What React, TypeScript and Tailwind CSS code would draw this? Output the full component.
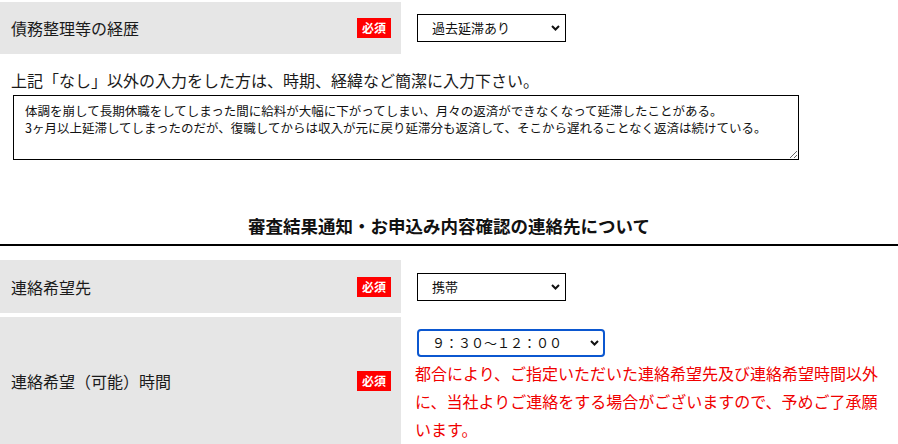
import { ChangeEvent, useState } from "react"

const FONT = { fontFamily: '"Noto Sans CJK JP", "Noto Sans", sans-serif' }

function Badge() {
  return (
    <span className="flex h-[20px] w-[34px] items-center justify-center bg-[#ff0000] text-[12px] font-bold leading-none text-white">
      必須
    </span>
  )
}

function Chevron() {
  return (
    <svg width="9" height="6" viewBox="0 0 9 6" className="pointer-events-none absolute top-1/2 right-[6px] -translate-y-1/2">
      <path d="M1 1 L4.5 4.5 L8 1" fill="none" stroke="#111" strokeWidth="2" />
    </svg>
  )
}

function Select({ value, options, width, focused }: { value: string; options: string[]; width: string; focused?: boolean }) {
  const [v, setV] = useState(value)
  return (
    <div className={`relative ${width}`}>
      <select
        value={v}
        onChange={(e: ChangeEvent<HTMLSelectElement>) => setV(e.target.value)}
        className={
          focused
            ? "h-[28px] w-full appearance-none rounded-[4px] border-2 border-[#0b57d0] bg-white pl-[13px] text-[13px] text-[#111] outline-none"
            : "h-[28px] w-full appearance-none border border-black bg-white pl-[14px] text-[13px] text-[#111] outline-none"
        }
      >
        {options.map((o) => (
          <option key={o}>{o}</option>
        ))}
      </select>
      <Chevron />
    </div>
  )
}

function Label({ text }: { text: string }) {
  return (
    <div className="flex w-[401px] shrink-0 items-center justify-between bg-[#e6e6e6] pr-[10px] pl-[11px]">
      <span className="text-[16px] text-[#1a1a1a]">{text}</span>
      <Badge />
    </div>
  )
}

export default function App() {
  const [memo, setMemo] = useState(
    "体調を崩して長期休職をしてしまった間に給料が大幅に下がってしまい、月々の返済ができなくなって延滞したことがある。\n3ヶ月以上延滞してしまったのだが、復職してからは収入が元に戻り延滞分も返済して、そこから遅れることなく返済は続けている。"
  )

  return (
    <div className="w-[898px] overflow-hidden bg-white pt-[2px]" style={FONT}>
      <div className="flex h-[52px]">
        <Label text="債務整理等の経歴" />
        <div className="flex items-center pl-[16px]">
          <Select value="過去延滞あり" options={["なし", "過去延滞あり", "債務整理あり"]} width="w-[149px]" />
        </div>
      </div>

      <p className="mt-[14px] pl-[11px] text-[16px] leading-[24px] text-[#1a1a1a]">
        上記「なし」以外の入力をした方は、時期、経緯など簡潔に入力下さい。
      </p>
      <textarea
        value={memo}
        onChange={(e) => setMemo(e.target.value)}
        className="mt-[3px] ml-[13px] block h-[65px] w-[786px] border border-black pt-[6px] pr-[4px] pl-[11px] text-[12.5px] leading-[17px] text-[#111] outline-none"
      />

      <h2 className="mt-[52px] border-b-2 border-black pb-[5px] text-center text-[17.5px] leading-[27px] font-bold text-[#111]">
        審査結果通知・お申込み内容確認の連絡先について
      </h2>

      <div className="mt-[14px] flex h-[53px]">
        <Label text="連絡希望先" />
        <div className="flex items-center pl-[16px]">
          <Select value="携帯" options={["携帯", "自宅", "勤務先"]} width="w-[149px]" />
        </div>
      </div>

      <div className="mt-[4px] flex">
        <Label text="連絡希望（可能）時間" />
        <div className="flex flex-col pt-[12px] pr-[10px] pb-[2px] pl-[14px]">
          <div className="ml-[2px]">
            <Select
              value="９：３０～１２：００"
              options={["９：３０～１２：００", "１２：００～１５：００", "１５：００～１８：００"]}
              width="w-[188px]"
              focused
            />
          </div>
          <p className="mt-[2px] text-[16px] leading-[28px] text-[#f00000]">
            都合により、ご指定いただいた連絡希望先及び連絡希望時間以外に、当社よりご連絡をする場合がございますので、予めご了承願います。
          </p>
        </div>
      </div>
    </div>
  )
}
